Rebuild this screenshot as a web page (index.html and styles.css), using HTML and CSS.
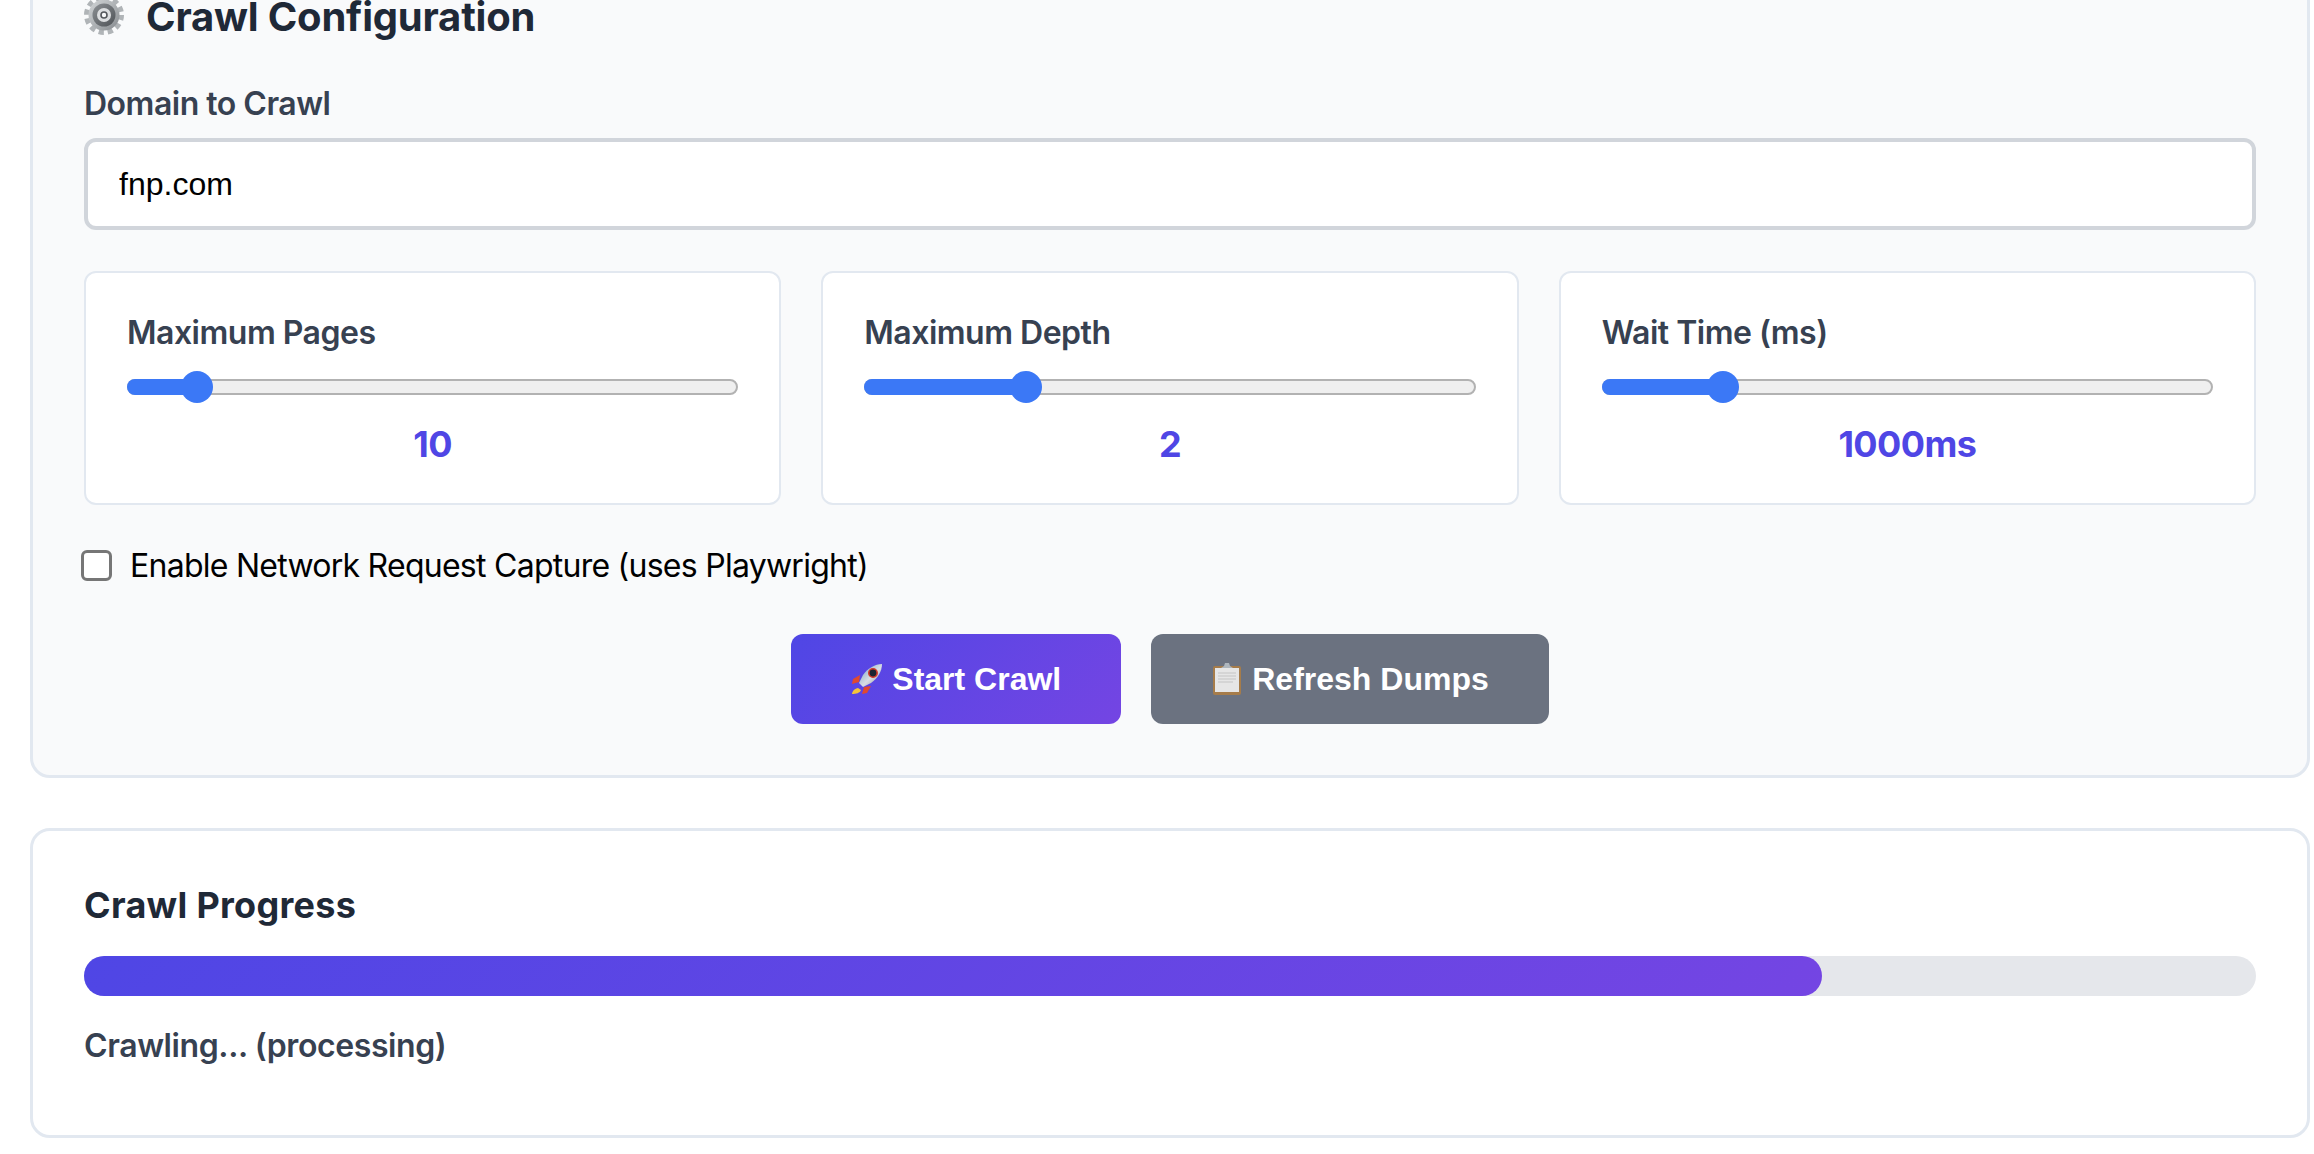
FILE: index.html
```html
<!doctype html>
<html>
<head>
  <title>Crawl Configuration</title>
  <link rel="stylesheet" href="styles.css">
</head>
<body>
  <main class="page">
    <section class="panel config">
      <h2 class="panel-title">
        <svg class="emoji-gear" viewBox="0 0 40 40">
          <defs>
            <linearGradient id="gear-metal" x1="0" y1="0" x2="1" y2="1">
              <stop offset="0" stop-color="#d3d6d8"/>
              <stop offset="0.6" stop-color="#a7abae"/>
              <stop offset="1" stop-color="#84888c"/>
            </linearGradient>
            <linearGradient id="gear-ring" x1="0" y1="0" x2="1" y2="1">
              <stop offset="0" stop-color="#8c9094"/>
              <stop offset="1" stop-color="#4f5357"/>
            </linearGradient>
          </defs>
          <circle cx="20" cy="20" r="17.5" fill="none" stroke="#b0b4b7" stroke-width="5" stroke-dasharray="5.2 3.96"/>
          <circle cx="20" cy="20" r="15.5" fill="url(#gear-metal)"/>
          <circle cx="20" cy="20" r="11.5" fill="url(#gear-ring)"/>
          <circle cx="20" cy="20" r="7" fill="#dcdee0"/>
          <circle cx="20" cy="20" r="3" fill="#f7f8f9" stroke="#55585c" stroke-width="1.6"/>
        </svg>Crawl Configuration
      </h2>

      <div class="field">
        <label class="field-label" for="domain">Domain to Crawl</label>
        <input class="text-input" id="domain" type="text" value="fnp.com">
      </div>

      <div class="slider-grid">
        <div class="slider-card">
          <label class="field-label">Maximum Pages</label>
          <div class="slider">
            <input type="range" min="1" max="100" value="10">
            <span class="slider-fill" style="width: 68px"></span>
          </div>
          <div class="slider-value">10</div>
        </div>
        <div class="slider-card">
          <label class="field-label">Maximum Depth</label>
          <div class="slider">
            <input type="range" min="1" max="5" value="2">
            <span class="slider-fill" style="width: 161px"></span>
          </div>
          <div class="slider-value">2</div>
        </div>
        <div class="slider-card">
          <label class="field-label">Wait Time (ms)</label>
          <div class="slider">
            <input type="range" min="100" max="5100" value="1000">
            <span class="slider-fill" style="width: 120px"></span>
          </div>
          <div class="slider-value">1000ms</div>
        </div>
      </div>

      <label class="check-row">
        <input type="checkbox">
        Enable Network Request Capture (uses Playwright)
      </label>

      <div class="actions">
        <button class="btn btn-primary" type="button">
          <svg class="emoji" viewBox="0 0 32 32">
            <defs>
              <linearGradient id="rocket-body" x1="0" y1="0" x2="1" y2="1">
                <stop offset="0" stop-color="#6f9dc4"/>
                <stop offset="0.55" stop-color="#d9dee3"/>
                <stop offset="1" stop-color="#8a9096"/>
              </linearGradient>
            </defs>
            <path d="M7 25 C2 26 1 30 1 31 C5 31 9 30 10 27 Z" fill="#f5c53a"/>
            <path d="M9 12 L2 16 L1 21 L8 19 Z" fill="#e0492f"/>
            <path d="M20 23 L16 30 L11 31 L13 24 Z" fill="#e0492f"/>
            <path d="M31 1 C24 1 17 5 12 12 L8 20 L12 24 L20 20 C27 15 31 8 31 1 Z" fill="url(#rocket-body)"/>
            <circle cx="22" cy="10" r="4.2" fill="#1b2430" stroke="#d23a2c" stroke-width="1.6"/>
          </svg>Start Crawl
        </button>
        <button class="btn btn-secondary" type="button">
          <svg class="emoji" viewBox="0 0 32 32">
            <rect x="2" y="3" width="28" height="29" rx="2" fill="#a67c4a"/>
            <rect x="4" y="5" width="24" height="24" fill="#e6e6e6"/>
            <path d="M7 10 H25 M7 13 H25 M7 16 H25 M7 19 H22" stroke="#cfcfcf" stroke-width="1.4"/>
            <path d="M10 5 L13 3 L14 0 H18 L19 3 L22 5 Z" fill="#aeb6bd"/>
          </svg>Refresh Dumps
        </button>
      </div>
    </section>

    <section class="panel progress">
      <h3 class="progress-title">Crawl Progress</h3>
      <div class="progress-track">
        <div class="progress-fill" style="width: 80%"></div>
      </div>
      <p class="progress-text">Crawling... (processing)</p>
    </section>
  </main>
</body>
</html>
```

FILE: styles.css
```css
html, body {
  height: 100%;
  overflow: hidden;
}

body {
  background: white;
  font-family: Inter, 'Noto Sans', sans-serif;
  margin: 0;
}

/* The screenshot is scrolled, the top of the first panel sits above the fold. */
.page {
  margin: -60px 4px 0 30px;
}

.panel {
  border: 3px solid #e2e8f0;
  border-radius: 20px;
  box-sizing: border-box;
}

.config {
  background: #f9fafb;
  height: 838px;
  padding: 51px 51px 0;
}

.panel-title {
  align-items: center;
  color: #1f2937;
  display: flex;
  font-size: 40px;
  font-weight: 700;
  letter-spacing: -0.2px;
  line-height: 46px;
  margin: 0 0 46px;
}

.emoji-gear {
  height: 40px;
  margin: -4px 22px 0 0;
  width: 40px;
}

.field-label {
  color: #374151;
  display: block;
  font-size: 32px;
  font-weight: 600;
  letter-spacing: -0.5px;
  line-height: 36px;
}

.field .field-label {
  margin-bottom: 16px;
}

.text-input {
  background: white;
  border: 4px solid #d1d5db;
  border-radius: 12px;
  box-sizing: border-box;
  color: black;
  display: block;
  font-family: 'Liberation Sans', Arial, sans-serif;
  font-size: 32px;
  height: 92px;
  padding: 0 31px;
  width: 100%;
}

.slider-grid {
  display: grid;
  gap: 40px;
  grid-template-columns: repeat(3, 1fr);
  margin-top: 41px;
}

.slider-card {
  background: white;
  border: 2px solid #e2e8f0;
  border-radius: 12px;
  box-sizing: border-box;
  height: 234px;
  padding: 42px 41px 0;
}

.slider {
  height: 32px;
  margin-top: 20px;
  position: relative;
}

.slider input {
  -webkit-appearance: none;
  appearance: none;
  background: transparent;
  display: block;
  height: 32px;
  margin: 0;
  width: 100%;
}

.slider input::-webkit-slider-runnable-track {
  background: #efefef;
  border: 2px solid #b2b2b2;
  border-radius: 8px;
  box-sizing: border-box;
  height: 16px;
}

.slider input::-webkit-slider-thumb {
  -webkit-appearance: none;
  background: #3b78f6;
  border-radius: 50%;
  height: 32px;
  margin-top: -10px;
  width: 32px;
}

.slider-fill {
  background: #3b78f6;
  border-radius: 8px 0 0 8px;
  height: 16px;
  left: 0;
  pointer-events: none;
  position: absolute;
  top: 8px;
}

.slider-value {
  color: #4f46e5;
  font-size: 36px;
  font-weight: 700;
  letter-spacing: -0.6px;
  line-height: 40px;
  margin-top: 21px;
  text-align: center;
}

.check-row {
  align-items: center;
  color: black;
  display: flex;
  font-size: 32px;
  gap: 18px;
  letter-spacing: -0.74px;
  margin: 41px 0 0 -3px;
}

.check-row input {
  -webkit-appearance: none;
  appearance: none;
  background: white;
  border: 3px solid #767676;
  border-radius: 6px;
  box-sizing: border-box;
  height: 31px;
  margin: 0;
  width: 31px;
}

.actions {
  display: flex;
  gap: 30px;
  justify-content: center;
  margin-top: 49px;
}

.btn {
  border: none;
  border-radius: 12px;
  color: white;
  font-family: 'Liberation Sans', Arial, sans-serif;
  font-size: 32px;
  font-weight: 700;
  height: 90px;
  padding: 0 60px;
  white-space: nowrap;
}

.btn-primary {
  background: linear-gradient(135deg, #4f46e5, #7445e3);
}

.btn-secondary {
  background: #6b7280;
}

.emoji {
  height: 32px;
  margin-right: 9px;
  vertical-align: -5px;
  width: 32px;
}

.progress {
  background: white;
  height: 310px;
  margin-top: 50px;
  padding: 54px 51px 0;
}

.progress-title {
  color: #1f2937;
  font-size: 36px;
  font-weight: 700;
  letter-spacing: 0.3px;
  line-height: 40px;
  margin: 0 0 31px;
}

.progress-track {
  background: #e5e7eb;
  border-radius: 20px;
  height: 40px;
}

.progress-fill {
  background: linear-gradient(135deg, #4f46e5, #7445e3);
  border-radius: 20px;
  height: 100%;
}

.progress-text {
  color: #374151;
  font-size: 32px;
  font-weight: 600;
  letter-spacing: -0.4px;
  line-height: 36px;
  margin: 32px 0 0;
}
```
